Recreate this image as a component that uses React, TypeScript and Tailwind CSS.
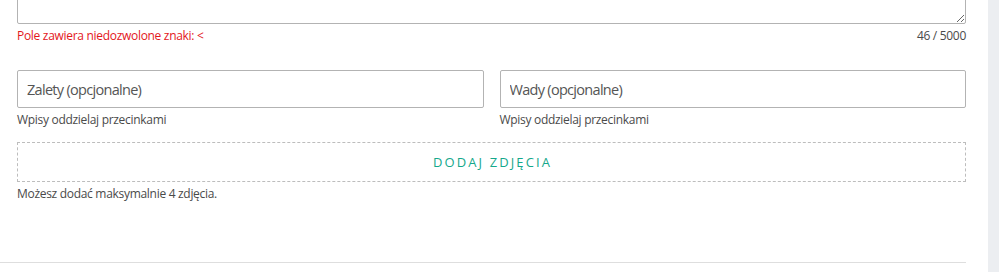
import React from "react";

const font = { fontFamily: '"Open Sans", "Noto Sans", sans-serif' };

function Field({ placeholder }: { placeholder: string }) {
  return (
    <div className="flex flex-col">
      <input
        placeholder={placeholder}
        className="h-[38px] w-full rounded-[2px] border border-[#b3b3b3] bg-white px-[9px] text-[14.5px] tracking-[-0.7px] text-[#333] outline-none placeholder:text-[#555]"
      />
      <p className="mt-[4px] text-[12px] leading-[16px] tracking-[-0.3px] text-[#4a4a4a]">Wpisy oddzielaj przecinkami</p>
    </div>
  );
}

export default function App() {
  return (
    <div className="flex h-[272px] w-[999px] overflow-hidden bg-white" style={font}>
      <div className="flex w-[988px] flex-col">
        <div className="flex flex-col pl-[17px] pr-[22px]">
          <textarea
            defaultValue=""
            className="-mt-[20px] block h-[44px] w-full resize-y rounded-[2px] border border-[#b3b3b3] bg-white outline-none"
          />
          <div className="mt-[4px] flex items-center justify-between text-[12px] leading-[16px] tracking-[-0.3px]">
            <span className="text-[#e3161b]">Pole zawiera niedozwolone znaki: &lt;</span>
            <span className="text-[#4a4a4a]">46 / 5000</span>
          </div>

          <div className="mt-[26px] grid grid-cols-2 gap-[16px]">
            <Field placeholder="Zalety (opcjonalne)" />
            <Field placeholder="Wady (opcjonalne)" />
          </div>

          <button
            type="button"
            className="mt-[14px] flex h-[40px] w-full items-center justify-center border border-dashed border-[#bdbdbd] bg-white pl-[2px] pt-[2px] text-[13px] font-medium tracking-[2.1px] text-[#14a88b]"
          >
            DODAJ ZDJĘCIA
          </button>
          <p className="mt-[4px] text-[12px] leading-[16px] tracking-[-0.3px] text-[#4a4a4a]">
            Możesz dodać maksymalnie 4 zdjęcia.
          </p>
        </div>
        <div className="mt-[60px] h-px w-[966px] bg-[#dedede]" />
      </div>
      <div className="h-full flex-1 bg-[#eceef1]" />
    </div>
  );
}
